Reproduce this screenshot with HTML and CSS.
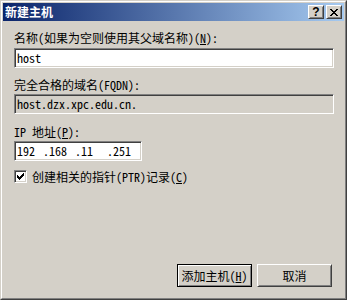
FILE: index.html
```html
<!DOCTYPE html>
<html lang="zh-CN">
<head>
    <meta charset="UTF-8">
    <title>新建主机</title>
    <link rel="stylesheet" href="styles.css">
</head>
<body>
    <div class="window">
        <div class="frame">
            <div class="titlebar">
                <span class="title">新建主机</span>
                <div class="caption-btns">
                    <button class="cap cap-help">?</button>
                    <button class="cap cap-close">
                        <svg width="8" height="7" viewBox="0 0 8 7" shape-rendering="crispEdges">
                            <path d="M0 0h2v1h-2zM6 0h2v1h-2zM1 1h2v1h-2zM5 1h2v1h-2zM2 2h4v1h-4zM3 3h2v1h-2zM2 4h4v1h-4zM1 5h2v1h-2zM5 5h2v1h-2zM0 6h2v1h-2zM6 6h2v1h-2z" fill="#000"/>
                        </svg>
                    </button>
                </div>
            </div>

            <div class="content">
                <div class="lbl">名称(如果为空则使用其父域名称)(<u>N</u>):</div>
                <div class="edit">host</div>

                <div class="lbl lbl-gap">完全合格的域名(FQDN):</div>
                <div class="edit readonly">host.dzx.xpc.edu.cn.</div>

                <div class="lbl lbl-gap2">IP 地址(<u>P</u>):</div>
                <div class="edit ip">
                    <span class="oct">192</span><span class="dot">.</span>
                    <span class="oct">168</span><span class="dot">.</span>
                    <span class="oct">11</span><span class="dot">.</span>
                    <span class="oct">251</span>
                </div>

                <div class="check-row">
                    <span class="checkbox">
                        <svg width="7" height="7" viewBox="0 0 7 7" shape-rendering="crispEdges">
                            <path d="M6 0h1v3h-1zM5 1h1v3h-1zM4 2h1v3h-1zM3 3h1v3h-1zM2 4h1v3h-1zM1 3h1v3h-1zM0 2h1v3h-1z" fill="#000"/>
                        </svg>
                    </span>
                    <span class="check-label">创建相关的指针(PTR)记录(<u>C</u>)</span>
                </div>

                <div class="actions">
                    <button class="btn default">添加主机(<u>H</u>)</button>
                    <button class="btn">取消</button>
                </div>
            </div>
        </div>
    </div>
</body>
</html>
```

FILE: styles.css
```css
body {
    margin: 0;
    font-family: "Noto Sans Mono CJK SC", "Noto Sans CJK SC", "Liberation Mono", monospace;
    font-size: 12px;
    color: #000;
    background: #d4d0c8;
}
.window {
    width: 347px;
    height: 300px;
    box-sizing: border-box;
    border: 1px solid;
    border-color: #d4d0c8 #404040 #404040 #d4d0c8;
}
.frame {
    height: 100%;
    box-sizing: border-box;
    border: 1px solid;
    border-color: #fff #808080 #808080 #fff;
    padding: 1px;
    background: #d4d0c8;
    display: flex;
    flex-direction: column;
}
.titlebar {
    height: 18px;
    display: flex;
    align-items: center;
    justify-content: space-between;
    padding: 0 2px;
    background: linear-gradient(to right, #0a246a, #a6caf0);
}
.title {
    color: #fff;
    font-weight: bold;
    line-height: 12px;
    font-family: "Noto Sans CJK SC", sans-serif;
}
.caption-btns {
    display: flex;
    gap: 2px;
}
.cap {
    width: 16px;
    height: 14px;
    padding: 0;
    margin: 0;
    box-sizing: border-box;
    border: 1px solid;
    border-color: #fff #404040 #404040 #fff;
    box-shadow: inset 1px 1px #d4d0c8, inset -1px -1px #808080;
    background: #d4d0c8;
    display: flex;
    align-items: center;
    justify-content: center;
}
.cap-help {
    font-family: "Liberation Sans", sans-serif;
    font-weight: bold;
    font-size: 12px;
    line-height: 12px;
}
.content {
    flex: 1;
    display: flex;
    flex-direction: column;
    padding: 11px 11px 10px 11px;
}
.lbl {
    line-height: 12px;
}
.lbl-gap {
    margin-top: 11px;
}
.lbl-gap2 {
    margin-top: 12px;
}
.edit {
    width: 320px;
    height: 20px;
    box-sizing: border-box;
    margin-top: 4px;
    padding: 0 2px;
    border: 1px solid;
    border-color: #808080 #fff #fff #808080;
    box-shadow: inset 1px 1px #404040, inset -1px -1px #d4d0c8;
    background: #fff;
    line-height: 18px;
    white-space: nowrap;
}
.readonly {
    background: #d4d0c8;
    margin-top: 3px;
}
.ip {
    width: 128px;
    margin-top: 3px;
    display: flex;
}
.oct {
    width: 27px;
}
.dot {
    width: 6px;
}
.check-row {
    display: flex;
    align-items: center;
    margin-top: 9px;
    height: 13px;
}
.checkbox {
    width: 13px;
    height: 13px;
    box-sizing: border-box;
    border: 1px solid;
    border-color: #808080 #fff #fff #808080;
    box-shadow: inset 1px 1px #404040, inset -1px -1px #d4d0c8;
    background: #fff;
    display: flex;
    align-items: center;
    justify-content: center;
}
.check-label {
    margin-left: 5px;
    line-height: 12px;
}
.actions {
    margin-top: auto;
    display: flex;
    justify-content: flex-end;
    gap: 5px;
    padding-right: 1px;
}
.btn {
    width: 75px;
    height: 23px;
    box-sizing: border-box;
    padding: 0;
    margin: 0;
    font-family: inherit;
    font-size: 12px;
    color: #000;
    background: #d4d0c8;
    border: 1px solid;
    border-color: #fff #404040 #404040 #fff;
    box-shadow: inset 1px 1px #d4d0c8, inset -1px -1px #808080;
}
.btn.default {
    border-color: #000;
    box-shadow: inset 1px 1px #fff, inset -1px -1px #808080;
}
```
